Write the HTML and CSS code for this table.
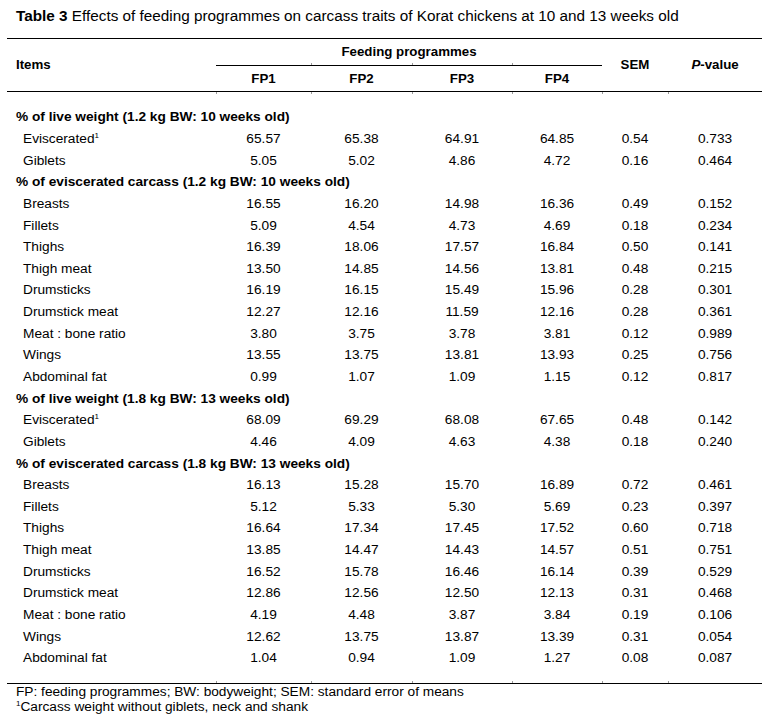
FILE: index.html
```html
<!DOCTYPE html>
<html lang="en">
<head>
<meta charset="utf-8">
<title>Table 3</title>
<link rel="stylesheet" href="styles.css">
</head>
<body>
<p class="caption"><b>Table 3</b> Effects of feeding programmes on carcass traits of Korat chickens at 10 and 13 weeks old</p>
<table class="data">
<colgroup>
<col class="c-items"><col class="c-fp1"><col class="c-fp2"><col class="c-fp3"><col class="c-fp4"><col class="c-sem"><col class="c-p">
</colgroup>
<thead>
<tr class="h1">
<th rowspan="2" class="items">Items</th>
<th colspan="4" class="fp">Feeding programmes</th>
<th rowspan="2" class="span2">SEM</th>
<th rowspan="2" class="span2"><i>P</i>-value</th>
</tr>
<tr class="h2">
<th>FP1</th><th class="tk">FP2</th><th class="tk">FP3</th><th class="tk">FP4</th>
</tr>
</thead>
<tbody>
<tr class="gap top"><td></td><td class="t"></td><td class="t"></td><td class="t"></td><td class="t"></td><td class="t"></td><td class="t"></td></tr>
<tr class="sec"><td colspan="7">% of live weight (1.2 kg BW: 10 weeks old)</td></tr>
<tr><td class="lab">Eviscerated<sup>1</sup></td><td>65.57</td><td>65.38</td><td>64.91</td><td>64.85</td><td>0.54</td><td>0.733</td></tr>
<tr><td class="lab">Giblets</td><td>5.05</td><td>5.02</td><td>4.86</td><td>4.72</td><td>0.16</td><td>0.464</td></tr>
<tr class="sec"><td colspan="7">% of eviscerated carcass (1.2 kg BW: 10 weeks old)</td></tr>
<tr><td class="lab">Breasts</td><td>16.55</td><td>16.20</td><td>14.98</td><td>16.36</td><td>0.49</td><td>0.152</td></tr>
<tr><td class="lab">Fillets</td><td>5.09</td><td>4.54</td><td>4.73</td><td>4.69</td><td>0.18</td><td>0.234</td></tr>
<tr><td class="lab">Thighs</td><td>16.39</td><td>18.06</td><td>17.57</td><td>16.84</td><td>0.50</td><td>0.141</td></tr>
<tr><td class="lab">Thigh meat</td><td>13.50</td><td>14.85</td><td>14.56</td><td>13.81</td><td>0.48</td><td>0.215</td></tr>
<tr><td class="lab">Drumsticks</td><td>16.19</td><td>16.15</td><td>15.49</td><td>15.96</td><td>0.28</td><td>0.301</td></tr>
<tr><td class="lab">Drumstick meat</td><td>12.27</td><td>12.16</td><td>11.59</td><td>12.16</td><td>0.28</td><td>0.361</td></tr>
<tr><td class="lab">Meat : bone ratio</td><td>3.80</td><td>3.75</td><td>3.78</td><td>3.81</td><td>0.12</td><td>0.989</td></tr>
<tr><td class="lab">Wings</td><td>13.55</td><td>13.75</td><td>13.81</td><td>13.93</td><td>0.25</td><td>0.756</td></tr>
<tr><td class="lab">Abdominal fat</td><td>0.99</td><td>1.07</td><td>1.09</td><td>1.15</td><td>0.12</td><td>0.817</td></tr>
<tr class="sec"><td colspan="7">% of live weight (1.8 kg BW: 13 weeks old)</td></tr>
<tr><td class="lab">Eviscerated<sup>1</sup></td><td>68.09</td><td>69.29</td><td>68.08</td><td>67.65</td><td>0.48</td><td>0.142</td></tr>
<tr><td class="lab">Giblets</td><td>4.46</td><td>4.09</td><td>4.63</td><td>4.38</td><td>0.18</td><td>0.240</td></tr>
<tr class="sec"><td colspan="7">% of eviscerated carcass (1.8 kg BW: 13 weeks old)</td></tr>
<tr><td class="lab">Breasts</td><td>16.13</td><td>15.28</td><td>15.70</td><td>16.89</td><td>0.72</td><td>0.461</td></tr>
<tr><td class="lab">Fillets</td><td>5.12</td><td>5.33</td><td>5.30</td><td>5.69</td><td>0.23</td><td>0.397</td></tr>
<tr><td class="lab">Thighs</td><td>16.64</td><td>17.34</td><td>17.45</td><td>17.52</td><td>0.60</td><td>0.718</td></tr>
<tr><td class="lab">Thigh meat</td><td>13.85</td><td>14.47</td><td>14.43</td><td>14.57</td><td>0.51</td><td>0.751</td></tr>
<tr><td class="lab">Drumsticks</td><td>16.52</td><td>15.78</td><td>16.46</td><td>16.14</td><td>0.39</td><td>0.529</td></tr>
<tr><td class="lab">Drumstick meat</td><td>12.86</td><td>12.56</td><td>12.50</td><td>12.13</td><td>0.31</td><td>0.468</td></tr>
<tr><td class="lab">Meat : bone ratio</td><td>4.19</td><td>4.48</td><td>3.87</td><td>3.84</td><td>0.19</td><td>0.106</td></tr>
<tr><td class="lab">Wings</td><td>12.62</td><td>13.75</td><td>13.87</td><td>13.39</td><td>0.31</td><td>0.054</td></tr>
<tr><td class="lab">Abdominal fat</td><td>1.04</td><td>0.94</td><td>1.09</td><td>1.27</td><td>0.08</td><td>0.087</td></tr>
<tr class="gap bottom"><td></td><td class="t"></td><td class="t"></td><td class="t"></td><td class="t"></td><td class="t"></td><td class="t"></td></tr>
</tbody>
</table>
<div class="notes">
<p>FP: feeding programmes; BW: bodyweight; SEM: standard error of means</p>
<p><sup>1</sup>Carcass weight without giblets, neck and shank</p>
</div>
</body>
</html>
```
FILE: styles.css
```css
html, body {
  margin: 0;
  padding: 0;
  background: #ffffff;
}

body {
  width: 767px;
  font-family: "Liberation Sans", Arial, sans-serif;
  color: #000000;
}

.caption {
  margin: 7px 0 0 16px;
  font-size: 15.3px;
  line-height: 17px;
  white-space: nowrap;
}

.caption b {
  font-weight: bold;
}

.data {
  margin: 14px 0 0 7px;
  width: 755px;
  table-layout: fixed;
  border-collapse: separate;
  border-spacing: 0;
  font-size: 13.7px;
}

.c-items { width: 209px; }
.c-fp1 { width: 95px; }
.c-fp2 { width: 101px; }
.c-fp3 { width: 100px; }
.c-fp4 { width: 90px; }
.c-sem { width: 66px; }
.c-p { width: 94px; }

.data th {
  font-size: 13.3px;
  font-weight: bold;
  line-height: 16px;
  text-align: center;
  vertical-align: middle;
  padding: 0;
}

.data th i {
  font-style: italic;
}

.h1 th {
  border-top: 1px solid #000;
  padding: 5px 0;
}

.h1 th.fp {
  border-bottom: 1px solid #000;
}

.h1 th.items {
  text-align: left;
  padding-left: 9px;
  border-bottom: 1px solid #000;
}

.h1 th.span2 {
  border-bottom: 1px solid #000;
}

.h2 th {
  padding: 4.5px 0;
  border-bottom: 1px solid #000;
  position: relative;
}

.h2 th.tk::before {
  content: "";
  position: absolute;
  left: 0;
  top: -3px;
  width: 1px;
  height: 2px;
  background: #9a9a9a;
}

.data td {
  padding: 0;
  line-height: 21.64px;
  text-align: center;
  vertical-align: middle;
  white-space: nowrap;
}

.data td.lab {
  text-align: left;
  padding-left: 16px;
}

.sec td {
  text-align: left;
  padding-left: 9px;
  font-weight: bold;
}

.gap td {
  line-height: 0;
  font-size: 0;
  position: relative;
}

.gap.top td {
  height: 14.3px;
}

.gap.bottom td {
  height: 14px;
  border-bottom: 1px solid #000;
}

.gap td.t::before {
  content: "";
  position: absolute;
  left: 0;
  width: 1px;
  height: 2px;
  background: #9a9a9a;
}

.gap.top td.t::before {
  top: 0;
}

.gap.bottom td.t::before {
  bottom: 0;
}

sup {
  font-size: 8px;
  line-height: 0;
  vertical-align: 5px;
}

.notes {
  margin: 0 0 0 16px;
  font-size: 13.7px;
  line-height: 15px;
}

.notes p {
  margin: 0;
  white-space: nowrap;
}
```
